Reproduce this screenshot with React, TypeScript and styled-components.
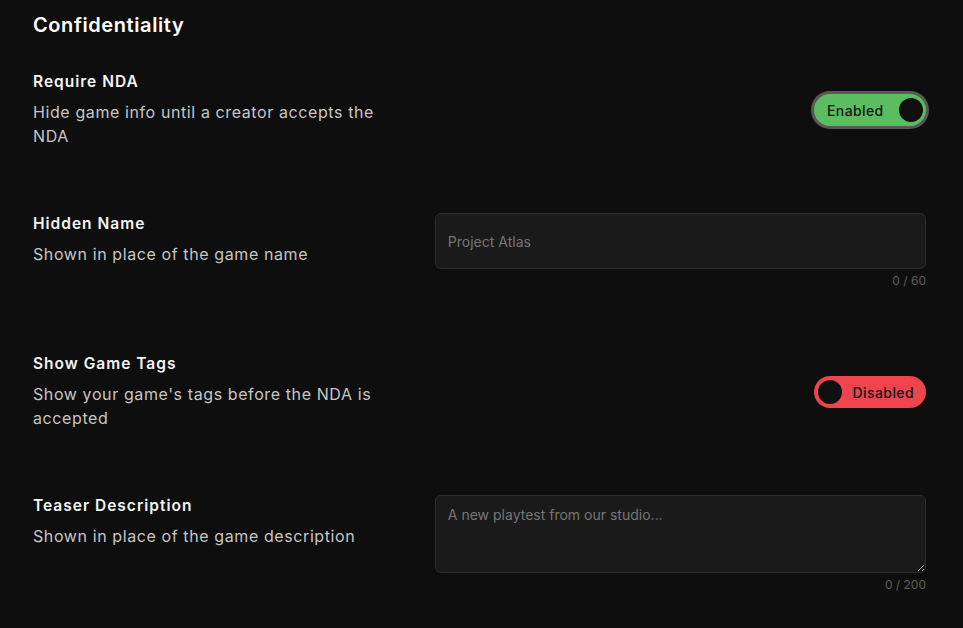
import React from "react";
import styled, { createGlobalStyle } from "styled-components";

const GlobalStyle = createGlobalStyle`
  body {
    margin: 0;
    background: #0e0e0e;
    font-family: Inter, "Open Sans", sans-serif;
    color: #f2f2f2;
  }
`;

type ToggleProps = {
  on: boolean;
  focused?: boolean;
};

const Toggle = ({ on, focused }: ToggleProps) => {
  return (
    <Track $on={on} $focused={focused}>
      {on ? (
        <>
          <ToggleLabel>Enabled</ToggleLabel>
          <Knob />
        </>
      ) : (
        <>
          <Knob />
          <ToggleLabel>Disabled</ToggleLabel>
        </>
      )}
    </Track>
  );
};

const App = () => {
  return (
    <Page>
      <GlobalStyle />
      <Heading>Confidentiality</Heading>
      <Rows>
        <Row>
          <Info>
            <Title>Require NDA</Title>
            <Description>Hide game info until a creator accepts the NDA</Description>
          </Info>
          <Control>
            <Toggle on focused />
          </Control>
        </Row>

        <Row $top>
          <Info $top>
            <Title>Hidden Name</Title>
            <Description>Shown in place of the game name</Description>
          </Info>
          <Field>
            <TextInput placeholder="Project Atlas" />
            <Counter>0 / 60</Counter>
          </Field>
        </Row>

        <Row>
          <Info>
            <Title>Show Game Tags</Title>
            <Description>Show your game's tags before the NDA is accepted</Description>
          </Info>
          <Control>
            <Toggle on={false} />
          </Control>
        </Row>

        <Row $top>
          <Info $top>
            <Title>Teaser Description</Title>
            <Description>Shown in place of the game description</Description>
          </Info>
          <Field>
            <TextArea placeholder="A new playtest from our studio…" />
            <Counter>0 / 200</Counter>
          </Field>
        </Row>
      </Rows>
    </Page>
  );
};
export default App;

const Page = styled.div`
  padding: 11px 37px 40px 33px;
`;

const Heading = styled.h2`
  margin: 0;
  font-size: 20px;
  line-height: 28px;
  font-weight: 600;
  letter-spacing: 0.6px;
  color: #ffffff;
`;

const Rows = styled.div`
  display: flex;
  flex-direction: column;
  gap: 65px;
  margin-top: 33px;
`;

const Row = styled.div<{ $top?: boolean }>`
  display: flex;
  align-items: ${({ $top }) => ($top ? "flex-start" : "center")};
`;

const Info = styled.div<{ $top?: boolean }>`
  width: 45%;
  padding-right: 28px;
  padding-top: ${({ $top }) => ($top ? "1px" : "0")};
  box-sizing: border-box;
  display: flex;
  flex-direction: column;
  gap: 8px;
`;

const Title = styled.div`
  font-size: 15.5px;
  line-height: 20px;
  font-weight: 600;
  letter-spacing: 1px;
  color: #f4f4f4;
`;

const Description = styled.div`
  font-size: 16px;
  line-height: 24px;
  letter-spacing: 0.6px;
  color: #c6c6c6;
`;

const Control = styled.div`
  flex: 1;
  display: flex;
  justify-content: flex-end;
`;

const Field = styled.div`
  flex: 1;
  display: flex;
  flex-direction: column;
  align-items: stretch;
`;

const inputBase = `
  box-sizing: border-box;
  width: 100%;
  background: #1a1a1a;
  border: 1px solid #2d2d2d;
  border-radius: 6px;
  color: #e6e6e6;
  font-family: Inter, "Open Sans", sans-serif;
  font-size: 14px;
  outline: none;
  &::placeholder {
    color: #767676;
  }
`;

const TextInput = styled.input`
  ${inputBase}
  height: 56px;
  padding: 0 12px;
`;

const TextArea = styled.textarea`
  ${inputBase}
  display: block;
  height: 78px;
  padding: 9px 12px;
  line-height: 20px;
  resize: vertical;
`;

const Counter = styled.div`
  margin-top: 4px;
  text-align: right;
  font-size: 12px;
  line-height: 16px;
  color: #5f5f5f;
`;

const Track = styled.div<{ $on: boolean; $focused?: boolean }>`
  box-sizing: border-box;
  width: 112px;
  height: 32px;
  border-radius: 16px;
  display: flex;
  align-items: center;
  justify-content: space-between;
  background: ${({ $on }) => ($on ? "#5bbd5f" : "#ee444e")};
  box-shadow: ${({ $focused }) => ($focused ? "0 0 0 3px #585858" : "none")};
  padding-left: ${({ $on }) => ($on ? "13px" : "4px")};
  padding-right: ${({ $on }) => ($on ? "3px" : "12px")};
`;

const ToggleLabel = styled.span`
  font-size: 14px;
  font-weight: 500;
  letter-spacing: 0.4px;
  color: #141414;
`;

const Knob = styled.span`
  width: 24px;
  height: 24px;
  border-radius: 50%;
  background: #101010;
`;
